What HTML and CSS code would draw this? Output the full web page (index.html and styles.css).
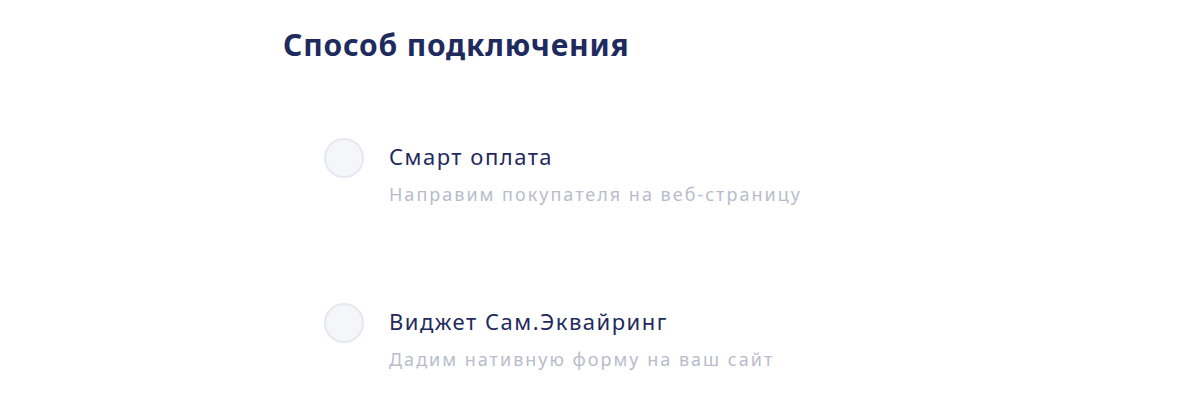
FILE: index.html
```html
<!DOCTYPE html>
<html lang="ru">
  <head>
    <meta charset="UTF-8" />
    <meta name="viewport" content="width=device-width, initial-scale=1.0" />
    <title>Способ подключения</title>
    <link rel="stylesheet" href="styles.css">
  </head>
  <body>
    <div class="connect">
      <h2 class="connect-title">Способ подключения</h2>
      <div class="options">
        <label class="option">
          <input type="radio" name="mode" value="smart" />
          <span class="radio"></span>
          <span class="option-text">
            <span class="option-name">Смарт оплата</span>
            <span class="option-desc">Направим покупателя на веб-страницу</span>
          </span>
        </label>
        <label class="option">
          <input type="radio" name="mode" value="widget" />
          <span class="radio"></span>
          <span class="option-text">
            <span class="option-name">Виджет Сам.Эквайринг</span>
            <span class="option-desc">Дадим нативную форму на ваш сайт</span>
          </span>
        </label>
      </div>
    </div>
  </body>
</html>
```

FILE: styles.css
```css
body {
  margin: 0;
  background: #fff;
  font-family: "Noto Sans", "Open Sans", sans-serif;
  color: #1f2a5e;
}
.connect {
  padding: 23px 0 0 283px;
}
.connect-title {
  margin: 0;
  font-size: 30px;
  font-weight: 700;
  line-height: 44px;
  letter-spacing: 0.8px;
  color: #1f2a5e;
}
.options {
  display: flex;
  flex-direction: column;
  gap: 94px;
  padding: 70px 0 0 41px;
}
.option {
  display: flex;
  align-items: flex-start;
  gap: 25px;
  cursor: pointer;
}
.option input {
  display: none;
}
.radio {
  flex: none;
  width: 36px;
  height: 36px;
  margin-top: 1px;
  border: 2px solid #e6e8ef;
  border-radius: 50%;
  background: #f5f6fa;
}
.option-text {
  display: flex;
  flex-direction: column;
}
.option-name {
  font-size: 22px;
  line-height: 38px;
  letter-spacing: 1.5px;
  color: #1f2a5e;
}
.option-desc {
  margin-top: 5px;
  font-size: 18px;
  line-height: 28px;
  letter-spacing: 2px;
  color: #b9bccb;
}
```
